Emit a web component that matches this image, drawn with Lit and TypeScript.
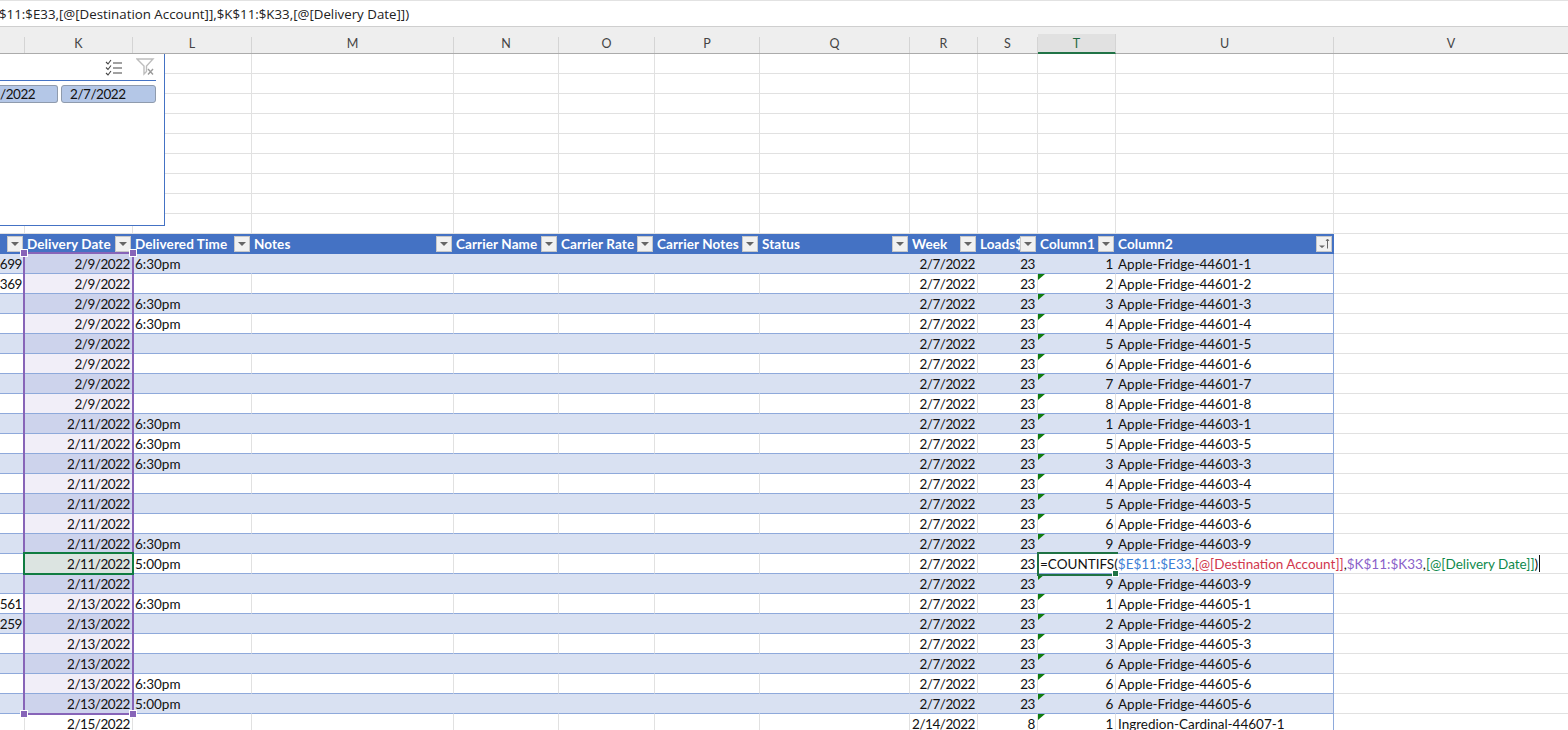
import { LitElement, html, css } from "lit";
import { customElement } from "lit/decorators.js";

const LETTERS = ["", "K", "L", "M", "N", "O", "P", "Q", "R", "S", "T", "U", "V"];
const HEADERS = ["", "Delivery Date", "Delivered Time", "Notes", "Carrier Name", "Carrier Rate", "Carrier Notes", "Status", "Week", "Loads$", "Column1", "Column2"];

type Row = [string, string, string, string, string, string, string];
// J, K, L, R, S, T, U
const R = (j: string, k: string, l: string, n: string, u: string): Row => [j, k, l, "2/7/2022", "23", n, u];
const ROWS: Row[] = [
  R("699", "2/9/2022", "6:30pm", "1", "Apple-Fridge-44601-1"),
  R("369", "2/9/2022", "", "2", "Apple-Fridge-44601-2"),
  R("", "2/9/2022", "6:30pm", "3", "Apple-Fridge-44601-3"),
  R("", "2/9/2022", "6:30pm", "4", "Apple-Fridge-44601-4"),
  R("", "2/9/2022", "", "5", "Apple-Fridge-44601-5"),
  R("", "2/9/2022", "", "6", "Apple-Fridge-44601-6"),
  R("", "2/9/2022", "", "7", "Apple-Fridge-44601-7"),
  R("", "2/9/2022", "", "8", "Apple-Fridge-44601-8"),
  R("", "2/11/2022", "6:30pm", "1", "Apple-Fridge-44603-1"),
  R("", "2/11/2022", "6:30pm", "5", "Apple-Fridge-44603-5"),
  R("", "2/11/2022", "6:30pm", "3", "Apple-Fridge-44603-3"),
  R("", "2/11/2022", "", "4", "Apple-Fridge-44603-4"),
  R("", "2/11/2022", "", "5", "Apple-Fridge-44603-5"),
  R("", "2/11/2022", "", "6", "Apple-Fridge-44603-6"),
  R("", "2/11/2022", "6:30pm", "9", "Apple-Fridge-44603-9"),
  R("", "2/11/2022", "5:00pm", "", ""),
  R("", "2/11/2022", "", "9", "Apple-Fridge-44603-9"),
  R("561", "2/13/2022", "6:30pm", "1", "Apple-Fridge-44605-1"),
  R("259", "2/13/2022", "", "2", "Apple-Fridge-44605-2"),
  R("", "2/13/2022", "", "3", "Apple-Fridge-44605-3"),
  R("", "2/13/2022", "", "6", "Apple-Fridge-44605-6"),
  R("", "2/13/2022", "6:30pm", "6", "Apple-Fridge-44605-6"),
  R("", "2/13/2022", "5:00pm", "6", "Apple-Fridge-44605-6"),
  ["", "2/15/2022", "", "2/14/2022", "8", "1", "Ingredion-Cardinal-44607-1"],
];
const ACTIVE = 15;

@customElement("app-root")
export class AppRoot extends LitElement {
  static styles = css`
    :host {
      display: block;
      width: 1568px;
      height: 730px;
      overflow: hidden;
      background: #fff;
      font-family: "Lato", "Liberation Sans", sans-serif;
      font-size: 13.5px;
      color: #111;
    }
    .fbar {
      height: 27px;
      box-sizing: border-box;
      border-top: 1px solid #e2e2e2;
      border-bottom: 1px solid #cfcfcf;
      display: flex;
      align-items: center;
      overflow: hidden;
      font-family: "Open Sans", sans-serif;
      font-size: 13.3px;
      color: #222;
      white-space: nowrap;
    }
    .fbar span { margin-left: -1px; }
    .cols, .grid {
      display: grid;
      grid-template-columns: 25px 108px 119px 202px 105px 96px 105px 150px 68px 60px 78px 218px 235px;
    }
    .cols {
      height: 27px;
      box-sizing: border-box;
      background: #eeeeee;
      border-bottom: 1px solid #ababab;
      align-items: end;
    }
    .col {
      height: 16px;
      line-height: 14px;
      box-sizing: border-box;
      text-align: center;
      color: #444;
      font-size: 12.5px;
      border-right: 1px solid #d4d4d4;
    }
    .col.sel {
      height: 20px;
      line-height: 19px;
      margin-bottom: -1px;
      background: #e1e1e1;
      border-bottom: 2px solid #217346;
      color: #1d6a41;
    }
    .sheet {
      position: relative;
    }
    .grid {
      grid-auto-rows: 20px;
    }
    .c {
      position: relative;
      box-sizing: border-box;
      border-right: 1px solid #e1e1e1;
      border-bottom: 1px solid #e1e1e1;
      line-height: 20px;
      height: 20px;
      white-space: nowrap;
      padding: 0 2px;
      overflow: hidden;
    }
    .num {
      display: flex;
      justify-content: flex-end;
      letter-spacing: -0.45px;
    }
    .d {
      border-bottom-color: #8ea9db;
    }
    .band {
      background: #d9e1f2;
      border-right-color: #d9e1f2;
    }
    .end {
      border-right-color: #8ea9db;
    }
    .tint {
      background: #f1eef8;
    }
    .tint.band {
      background: #cdd3ec;
      border-right-color: #cdd3ec;
    }
    .cur {
      background: #dce4e1;
    }
    .h {
      background: #4472c4;
      border-right-color: #4472c4;
      border-bottom-color: #4472c4;
      color: #fff;
      font-weight: 700;
      letter-spacing: 0.1px;
      display: flex;
      align-items: center;
      justify-content: space-between;
      padding: 0 1px 0 2px;
    }
    .h .lab {
      overflow: hidden;
      flex: 1;
      min-width: 0;
    }
    .btn {
      flex: none;
      width: 16px;
      height: 16px;
      box-sizing: border-box;
      background: #f1f1f1;
      border: 1px solid #c8c8c8;
      display: flex;
      align-items: center;
      justify-content: center;
    }
    .btn svg { display: block; }
    .tri::before {
      content: "";
      position: absolute;
      left: 0;
      top: 0;
      width: 7px;
      height: 6px;
      background: #107c10;
      clip-path: polygon(0 0, 100% 0, 0 100%);
    }
    .edit {
      overflow: visible;
      z-index: 3;
      padding: 0;
      background: #fff;
    }
    .edit .txt {
      position: relative;
      display: inline-block;
      background: #fff;
      padding: 0 2px;
      height: 19px;
      line-height: 20px;
      z-index: 1;
    }
    .caret {
      display: inline-block;
      width: 1px;
      height: 17px;
      background: #111;
      vertical-align: -3px;
      margin-left: 1px;
    }
    .frame {
      position: absolute;
      left: -1px;
      top: -2px;
      width: 81px;
      height: 24px;
      box-sizing: border-box;
      border: 2px solid #1f7244;
      border-right: 0;
      z-index: 2;
      pointer-events: none;
    }
    .handle {
      position: absolute;
      right: 0;
      bottom: -2px;
      width: 5px;
      height: 5px;
      background: #1f7244;
      outline: 1px solid #fff;
    }
    .fx-b { color: #3d7fd6; }
    .fx-r { color: #d1384e; }
    .fx-p { color: #8a62c9; }
    .fx-g { color: #0f8a4c; }
    .slicer {
      position: absolute;
      left: -1px;
      top: 0;
      width: 166px;
      height: 172px;
      box-sizing: border-box;
      background: #fff;
      border: 1px solid #4472c4;
      border-width: 0 1px 1px 0;
      z-index: 4;
      padding: 4px 8px 0 0;
      display: flex;
      flex-direction: column;
    }
    .sl-top {
      display: flex;
      justify-content: flex-end;
      align-items: center;
      gap: 13px;
      height: 18px;
      padding-right: 1px;
    }
    .sl-top svg { display: block; }
    .sl-rule {
      height: 1px;
      background: #4472c4;
      margin: 4px 0 4px 0;
    }
    .sl-btns {
      display: flex;
      justify-content: flex-end;
      gap: 3px;
    }
    .chip {
      box-sizing: border-box;
      height: 18px;
      line-height: 16px;
      border: 1px solid #8f9bad;
      border-radius: 3px;
      background: #b4c7e7;
      overflow: hidden;
      white-space: nowrap;
      letter-spacing: -0.45px;
    }
    .chip.a {
      width: 58px;
      text-align: right;
      padding-right: 24px;
      border-left: 0;
      border-radius: 0 3px 3px 0;
    }
    .chip.b {
      width: 95px;
      padding-left: 8px;
    }
    .sel-box {
      position: absolute;
      left: 23px;
      top: 198px;
      width: 111px;
      height: 463px;
      box-sizing: border-box;
      border: 2px solid #8764b8;
      z-index: 5;
      pointer-events: none;
    }
    .hd {
      position: absolute;
      width: 6px;
      height: 6px;
      background: #8764b8;
      outline: 1px solid #fff;
    }
    .hd.tl { left: -4px; top: -4px; }
    .hd.tr { right: -4px; top: -4px; }
    .hd.bl { left: -4px; bottom: -4px; }
    .hd.br { right: -4px; bottom: -4px; }
    .act {
      position: absolute;
      left: 23px;
      top: 498px;
      width: 111px;
      height: 23px;
      box-sizing: border-box;
      border: 2px solid #107c41;
      z-index: 6;
      pointer-events: none;
    }
  `;

  private filterBtn() {
    return html`<span class="btn"><svg width="10" height="6" viewBox="0 0 10 6"><path d="M1 1h8L5 5z" fill="#666"/></svg></span>`;
  }

  private sortBtn() {
    return html`<span class="btn"><svg width="12" height="12" viewBox="0 0 12 12"><path d="M1 7.500h6L4 10z" fill="#666"/><path d="M9.500 1.500v9M8 3l1.500-2L11 3" fill="none" stroke="#666" stroke-width="1"/></svg></span>`;
  }

  private blank() {
    return Array.from({ length: 9 }).map(() =>
      LETTERS.map(() => html`<div class="c"></div>`)
    );
  }

  private header() {
    return html`
      <div class="c h"><span class="lab"></span>${this.filterBtn()}</div>
      ${HEADERS.slice(1).map(
        (h, i) => html`<div class="c h"><span class="lab">${h}</span>${i === 10 ? this.sortBtn() : this.filterBtn()}</div>`
      )}
      <div class="c"></div>
    `;
  }

  private row(r: Row, i: number) {
    const band = i % 2 === 0 ? "band" : "";
    const tint = i < 23 ? "tint" : "";
    const blanks = [0, 1, 2, 3, 4].map(() => html`<div class="c d ${band}"></div>`);
    const active = i === ACTIVE;
    return html`
      <div class="c d num ${band}">${r[0]}</div>
      <div class="c d num ${band} ${active ? "cur" : tint}">${r[1]}</div>
      <div class="c d ${band}">${r[2]}</div>
      ${blanks}
      <div class="c d num ${band}">${r[3]}</div>
      <div class="c d num ${band}">${r[4]}</div>
      ${active
        ? html`<div class="c d edit">
            <span class="txt">=COUNTIFS(<span class="fx-b">$E$11:$E33</span>,<span class="fx-r">[@[Destination Account]]</span>,<span class="fx-p">$K$11:$K33</span>,<span class="fx-g">[@[Delivery Date]]</span>)<span class="caret"></span></span>
            <span class="frame"><span class="handle"></span></span>
          </div>`
        : html`<div class="c d num ${band} ${i === 0 ? "" : "tri"}">${r[5]}</div>`}
      <div class="c d ${band} end">${r[6]}</div>
      <div class="c"></div>
    `;
  }

  render() {
    return html`
      <div class="fbar"><span>$11:$E33,[@[Destination Account]],$K$11:$K33,[@[Delivery Date]])</span></div>
      <div class="cols">
        ${LETTERS.map((l) => html`<div class="col ${l === "T" ? "sel" : ""}">${l}</div>`)}
      </div>
      <div class="sheet">
        <div class="grid">
          ${this.blank()}
          ${this.header()}
          ${ROWS.map((r, i) => this.row(r, i))}
        </div>
        <div class="slicer">
          <div class="sl-top">
            <svg width="18" height="17" viewBox="0 0 18 17" fill="none" stroke="#444" stroke-width="1.100">
              <path d="M1 3l2 2 3-4M1 8.500l2 2 3-4M1 14l2 2 3-4"/>
              <path d="M8 4h9M8 9h9M8 14h9"/>
            </svg>
            <svg width="19" height="18" viewBox="0 0 19 18" fill="none">
              <path d="M1 1h16l-6.500 7v5.500L8 16V8z" stroke="#bdbdbd" stroke-width="1.400"/>
              <path d="M12 11l5 5.500M17 11l-5 5.500" stroke="#9a9a9a" stroke-width="1.400"/>
            </svg>
          </div>
          <div class="sl-rule"></div>
          <div class="sl-btns">
            <div class="chip a">/2022</div>
            <div class="chip b">2/7/2022</div>
          </div>
        </div>
        <div class="sel-box">
          <span class="hd tl"></span><span class="hd tr"></span><span class="hd bl"></span><span class="hd br"></span>
        </div>
        <div class="act"></div>
      </div>
    `;
  }
}
